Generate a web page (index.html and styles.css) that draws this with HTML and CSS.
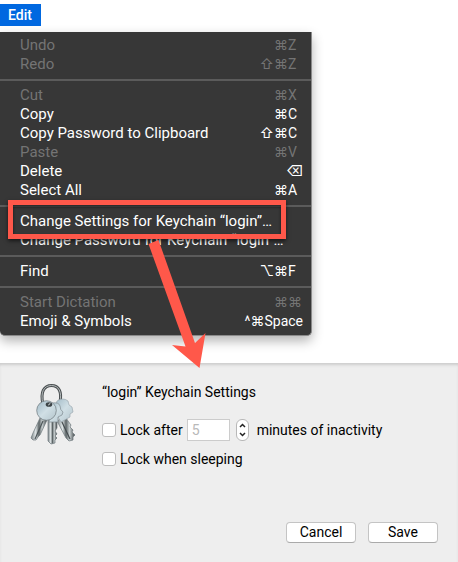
FILE: index.html
```html
<!DOCTYPE html>
<html lang="en">
<head>
<meta charset="utf-8">
<title>Keychain Access</title>
<link rel="stylesheet" href="styles.css">
</head>
<body>
<nav class="menubar"><button type="button" class="menubar-item">Edit</button></nav>

<div class="menu-area">
  <div class="menu" role="menu">
    <button type="button" class="item" disabled>Undo<span class="keys"><span>⌘</span><span class="key">Z</span></span></button>
    <button type="button" class="item" disabled>Redo<span class="keys"><span>⇧⌘</span><span class="key">Z</span></span></button>
    <hr>
    <button type="button" class="item" disabled>Cut<span class="keys"><span>⌘</span><span class="key">X</span></span></button>
    <button type="button" class="item">Copy<span class="keys"><span>⌘</span><span class="key">C</span></span></button>
    <button type="button" class="item">Copy Password to Clipboard<span class="keys"><span>⇧⌘</span><span class="key">C</span></span></button>
    <button type="button" class="item" disabled>Paste<span class="keys"><span>⌘</span><span class="key">V</span></span></button>
    <button type="button" class="item">Delete<span class="keys"><span class="key">⌫</span></span></button>
    <button type="button" class="item">Select All<span class="keys"><span>⌘</span><span class="key">A</span></span></button>
    <hr>
    <button type="button" class="item">Change Settings for Keychain “login”…</button>
    <button type="button" class="item">Change Password for Keychain “login”…</button>
    <hr>
    <button type="button" class="item">Find<span class="keys"><span>⌥⌘</span><span class="key">F</span></span></button>
    <hr>
    <button type="button" class="item" disabled>Start Dictation<span class="keys"><span>⌘</span><span class="key">⌘</span></span></button>
    <button type="button" class="item">Emoji &amp; Symbols<span class="keys"><span>^⌘</span><span class="key">Space</span></span></button>
  </div>
  <div class="callout"></div>
  <svg class="arrow" width="62" height="134" viewBox="0 0 62 134" aria-hidden="true">
    <path fill="#ff584a" d="M3.500 8 13.500 4 50 107 60.500 97 54.500 132 27 109 40.500 110.500Z"/>
  </svg>
</div>

<main class="sheet">
  <svg class="keychain" width="48" height="66" viewBox="0 0 48 66" aria-hidden="true">
    <defs>
      <linearGradient id="head" x1="0" y1="0" x2="1" y2="1"><stop offset="0" stop-color="#9fb8c5"/><stop offset=".5" stop-color="#d0dfe5"/><stop offset="1" stop-color="#b4c5cc"/></linearGradient>
      <linearGradient id="blade" x1="0" x2="1"><stop offset="0" stop-color="#7b8487"/><stop offset=".3" stop-color="#dfe5e6"/><stop offset=".5" stop-color="#5c6466"/><stop offset=".7" stop-color="#c9d0d1"/><stop offset="1" stop-color="#3e4446"/></linearGradient>
    </defs>
    <path d="M13 21C10 9 14 2.500 21.500 2.500S32 9 30 19" fill="none" stroke="#4c5153" stroke-width="3"/>
    <path d="M13 21C10 9 14 2.500 21.500 2.500S32 9 30 19" fill="none" stroke="#b4babb" stroke-width="1"/>
    <g stroke="#6d777b" stroke-width=".7" stroke-linejoin="round">
      <path fill="url(#blade)" d="M27 38 35 33 38 38 41 42 40 44 43 47 42 49 45 52 43 54 43 57 39 58 36 55Z"/>
      <path stroke="#444b4e" stroke-width="1.200" fill="none" d="M31 37 40 56"/>
      <path fill="url(#head)" stroke="#9dabb1" d="M27 18q6-4 11 0l1 4 3 2 1 5-3 2v3l-9 5-7-12Z"/>
      <path fill="url(#blade)" d="M18 36v22l3 3 4-1v-3l2-2-2-2 2-2-2-3 2-3V36Z"/>
      <path fill="url(#head)" stroke="#7f8b90" d="M22 20q7-1 8 3 0 4 3 6l-1 3-4 2v5h-9Z"/>
      <path fill="url(#blade)" d="M10 35 3 50 1 55 3 57 6 57 8 54 10 52 17 37Z"/>
      <path stroke="#4d5659" stroke-width="1.200" fill="none" d="M13 38 5 56"/>
      <circle cx="16.500" cy="27.500" r="9.800" fill="url(#head)"/>
    </g>
    <ellipse cx="19" cy="21.500" rx="3.300" ry="2.300" fill="#3d4447"/>
    <path d="M18 22q2 0 2-2" fill="none" stroke="#bbc2c4"/>
  </svg>
  <form class="settings">
    <h1>“login” Keychain Settings</h1>
    <div class="row">
      <input type="checkbox" id="after"><label for="after">Lock after</label>
      <input class="minutes" type="text" value="5" disabled aria-label="Minutes">
      <button type="button" class="stepper" aria-label="Adjust minutes"><svg width="11" height="20" viewBox="0 0 11 20"><path d="M3 7 5.500 4.500 8 7M3 13 5.500 15.500 8 13" fill="none" stroke="#222" stroke-width="1.500"/></svg></button>
      <span>minutes of inactivity</span>
    </div>
    <div class="row">
      <input type="checkbox" id="sleeping"><label for="sleeping">Lock when sleeping</label>
    </div>
    <div class="actions"><button type="button">Cancel</button><button type="button">Save</button></div>
  </form>
</main>
</body>
</html>
```
FILE: styles.css
```css
* { box-sizing: border-box; }
body {
  margin: 0;
  min-height: 100vh;
  display: flex;
  flex-direction: column;
  background: #fff;
  color: #000;
  font: 14px/19px Roboto, Inter, "Noto Sans", sans-serif;
}
button { font: inherit; border: 0; margin: 0; }

.menubar { padding: 4px 0 6px; display: flex; }
.menubar-item {
  background: #0068e0;
  color: #fff;
  height: 22px;
  padding: 0 9px 0 8px;
  font-size: 14px;
  font-weight: 500;
}

.menu-area { position: relative; width: 312px; margin-bottom: 27px; }
.menu {
  background: #373737;
  padding: 4px 0;
  border-right: 1px solid #8a8a8a;
  border-bottom: 1px solid #8a8a8a;
  border-radius: 0 0 5px 5px;
  box-shadow: 0 5px 12px rgba(0, 0, 0, .3);
  font-size: 15px;
}
.item {
  display: flex;
  justify-content: space-between;
  width: 100%;
  height: 19px;
  padding: 0 8px 0 20px;
  background: none;
  color: #fff;
  text-align: left;
  white-space: nowrap;
}
.item:disabled { color: #747474; }
.keys { display: flex; font-size: 14px; }
.key { min-width: 15px; }
.menu hr { height: 2px; margin: 5px 0; border: 0; background: #5b5b5b; }

.callout {
  position: absolute;
  left: 8px;
  top: 168px;
  width: 278px;
  height: 39px;
  border: 5px solid #ff584a;
  box-shadow: 0 2px 4px rgba(0, 0, 0, .6), inset 0 2px 3px rgba(0, 0, 0, .6);
}
.arrow { position: absolute; left: 145px; top: 204px; z-index: 1; }

.sheet {
  flex: 1;
  display: flex;
  align-items: flex-start;
  gap: 24px;
  padding: 20px 20px 19px 30px;
  background: #eee;
  box-shadow: inset 0 3px 3px -1px #ccc;
}
.keychain { flex: none; }
.settings { flex: 1; align-self: stretch; display: flex; flex-direction: column; }
.settings h1 { margin: 0 0 17px; font: inherit; }
.row { display: flex; align-items: center; height: 22px; margin-bottom: 7px; white-space: nowrap; }
input[type="checkbox"] {
  appearance: none;
  width: 14px;
  height: 14px;
  margin: 0 4px 0 0;
  background: #fff;
  border: 1px solid #bdbdbd;
  border-radius: 3px;
}
.minutes {
  width: 43px;
  height: 22px;
  margin: 0 6px 0 4px;
  padding: 0 4px;
  border: 1px solid #ccc;
  background: #fff;
  color: #b9b9b9;
  font: inherit;
}
.stepper {
  display: flex;
  width: 13px;
  height: 22px;
  margin-right: 8px;
  padding: 0;
  border: 1px solid #b8b8b8;
  border-radius: 6px;
  background: #fff;
}
.actions { display: flex; justify-content: flex-end; gap: 12px; margin-top: auto; }
.actions button {
  width: 70px;
  height: 21px;
  padding: 0;
  background: #fff;
  border: 1px solid #c4c4c4;
  border-bottom-color: #aaa;
  border-radius: 4px;
}
```
